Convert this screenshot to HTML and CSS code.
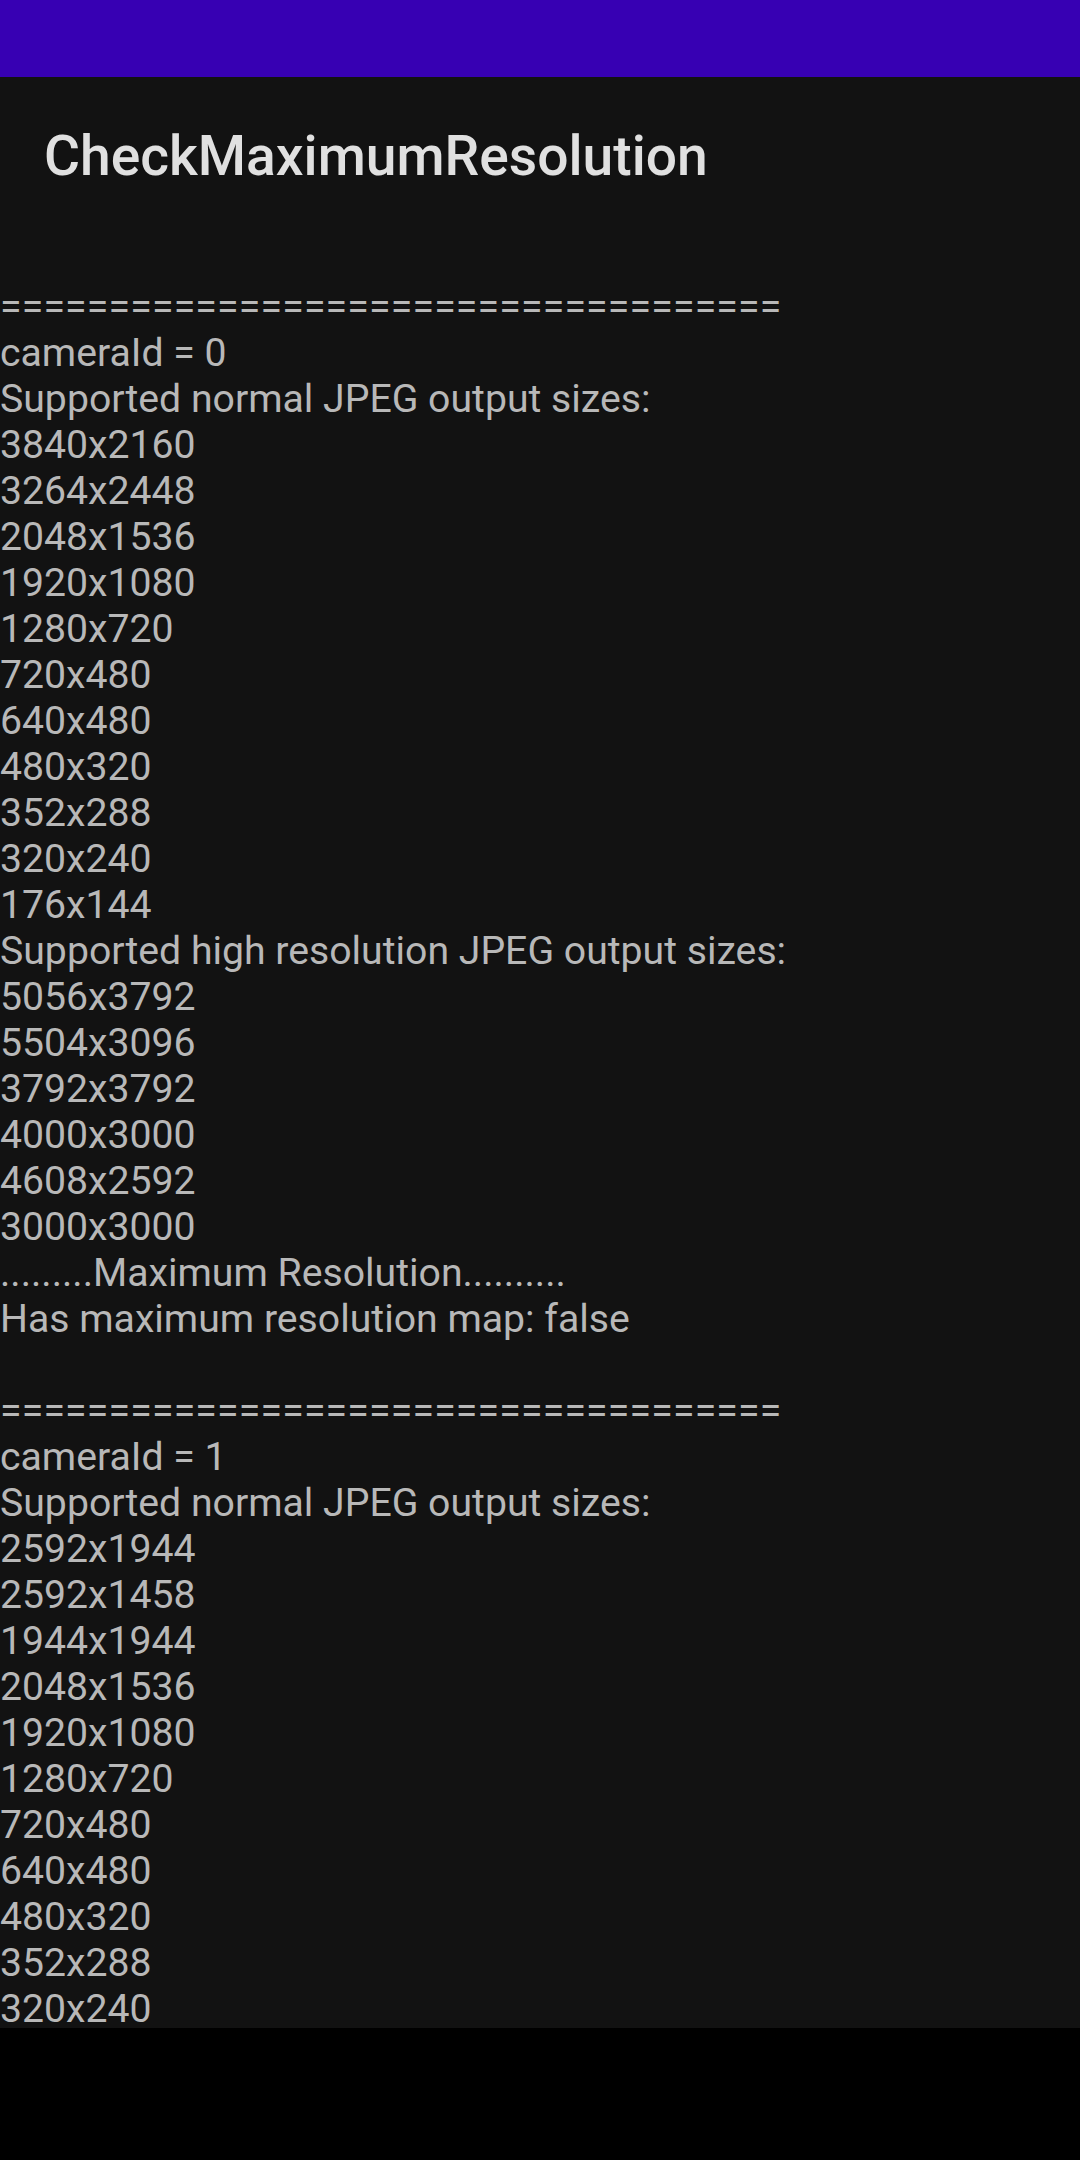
FILE: index.html
```html
<!DOCTYPE html>
<html>
<head>
<meta charset="utf-8">
<link rel="stylesheet" href="styles.css">
</head>
<body>
<div class="screen">
  <div class="status-bar"></div>
  <div class="toolbar"><span class="title">CheckMaximumResolution</span></div>
  <div class="content">
    <div class="log">
<span class="rule">====================================</span>
cameraId = 0
Supported normal JPEG output sizes:
3840x2160
3264x2448
2048x1536
1920x1080
1280x720
720x480
640x480
480x320
352x288
320x240
176x144
Supported high resolution JPEG output sizes:
5056x3792
5504x3096
3792x3792
4000x3000
4608x2592
3000x3000
.........Maximum Resolution..........
Has maximum resolution map: false

<span class="rule">====================================</span>
cameraId = 1
Supported normal JPEG output sizes:
2592x1944
2592x1458
1944x1944
2048x1536
1920x1080
1280x720
720x480
640x480
480x320
352x288
320x240</div>
  </div>
  <div class="nav-bar"></div>
</div>
</body>
</html>
```

FILE: styles.css
```css
html, body {
  margin: 0;
  padding: 0;
  background: #121212;
}

.screen {
  width: 1080px;
  height: 2160px;
  display: flex;
  flex-direction: column;
  overflow: hidden;
  font-family: Roboto, "Noto Sans", sans-serif;
}

.status-bar {
  height: 77px;
  flex: none;
  background: #3700b3;
}

.toolbar {
  height: 157px;
  flex: none;
  display: flex;
  align-items: center;
  padding-left: 44px;
  background: #121212;
}

.title {
  font-size: 55.2px;
  font-weight: 500;
  color: #e0e0e0;
  line-height: 66px;
}

.content {
  flex: 1;
  overflow: hidden;
  background: #121212;
  padding-top: 4px;
}

.log {
  white-space: pre;
  font-size: 39.2px;
  line-height: 46px;
  color: #b8b8b8;
}

.rule {
  letter-spacing: 0.2px;
}

.nav-bar {
  height: 132px;
  flex: none;
  background: #000000;
}
```
